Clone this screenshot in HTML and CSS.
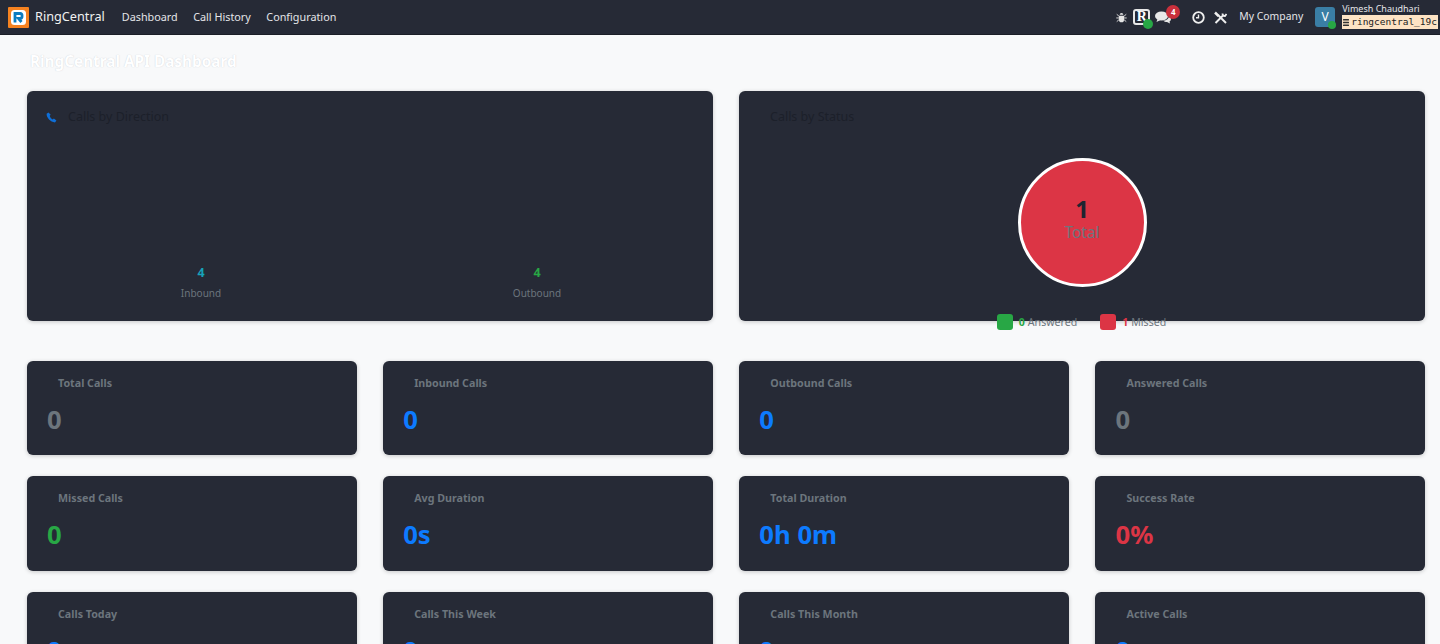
FILE: index.html
```html
<!DOCTYPE html>
<html lang="en">
<head>
<meta charset="UTF-8" />
<meta name="viewport" content="width=device-width, initial-scale=1" />
<title>RingCentral API Dashboard</title>
<link rel="stylesheet" href="styles.css">
</head>
<body>

<nav class="navbar">
  <svg class="brand-logo" width="21" height="21" viewBox="0 0 21 21">
    <rect width="21" height="21" rx="1" fill="#f58220"/>
    <rect x="3" y="3" width="15" height="15" rx="3.500" fill="#fff"/>
    <path d="M7 15.500V6.500h5.500a1.500 1.500 0 0 1 1.500 1.500v2a1.500 1.500 0 0 1-1.500 1.500H10.500l3 3.500" fill="none" stroke="#0a7cc1" stroke-width="2.800"/>
  </svg>
  <span class="brand-name">RingCentral</span>
  <div class="nav-menu">
    <a>Dashboard</a>
    <a>Call History</a>
    <a>Configuration</a>
  </div>

  <div class="nav-right">
    <svg class="icon-bug" width="11" height="11" viewBox="0 0 12 12" fill="#e4e4e4">
      <path d="M4 3a2 2 0 0 1 4 0z"/>
      <path d="M3.200 4h5.600v4.500a2.800 2.800 0 0 1-5.600 0z"/>
      <path d="M.8 2.500l2.400 2M11.200 2.500l-2.400 2M.3 6.500h3M8.700 6.500h3M.8 10.500l2.400-2M11.200 10.500l-2.400-2" stroke="#e4e4e4" stroke-width="1"/>
    </svg>
    <div class="icon-rbox">
      <span>R</span>
      <i class="dot"></i>
    </div>
    <div class="icon-chat">
      <svg width="16" height="13" viewBox="0 0 16 13" fill="#e8e8e8">
        <ellipse cx="6.500" cy="5" rx="6.500" ry="4.500"/>
        <path d="M2.500 8L1.500 11l4-2z"/>
        <path d="M14 5c1.500 1 2 2 2 3 0 1-.6 2-1.500 2.500l.5 2-3-1.500c-1.500 0-3-.5-3.500-1.500 3 0 5.500-2 5.500-4.500z"/>
      </svg>
      <span class="badge">4</span>
    </div>
    <svg class="icon-clock" width="13" height="13" viewBox="0 0 13 13" fill="none" stroke="#eee" stroke-width="1.800">
      <circle cx="6.500" cy="6.500" r="5.300"/>
      <path d="M6.500 3.500v3.200H4" stroke-width="1.400"/>
    </svg>
    <svg class="icon-tools" width="13" height="13" viewBox="0 0 13 13" fill="none" stroke="#eee">
      <path d="M1.500 12L9 4.500" stroke-width="2"/>
      <path d="M12 12L4 4" stroke-width="2"/>
      <path d="M1 1.500L4.500 5" stroke-width="2.500"/>
      <path d="M8.500 2.500a2.500 2.500 0 0 0 2.500 2.500L12.500 3" stroke-width="1.800"/>
    </svg>
    <span class="company">My Company</span>
    <div class="avatar">V<i class="dot"></i></div>
    <div class="user">
      <div class="user-name">Vimesh Chaudhari</div>
      <div class="db-tag">
        <svg width="6" height="7" viewBox="0 0 6 7" fill="#333"><rect width="6" height="1.500" rx=".5"/><rect y="2.700" width="6" height="1.500" rx=".5"/><rect y="5.400" width="6" height="1.500" rx=".5"/></svg>
        <code>ringcentral_19c</code>
      </div>
    </div>
  </div>
</nav>

<main class="content">
  <h1 class="page-title">RingCentral API Dashboard</h1>

  <div class="chart-row">
    <section class="panel">
      <h2 class="panel-title">
        <svg width="11" height="11" viewBox="0 0 11 11"><path d="M2.500.5L.6 1.800C.4 5.500 4.500 10.300 9 10.400l1.400-2L7.900 6.600 6.700 7.500C5.200 6.800 4 5.300 3.700 3.800l1-1z" fill="#0f6fd8"/></svg>
        Calls by Direction
      </h2>
      <div class="direction">
        <div class="direction-col">
          <div class="direction-value inbound">4</div>
          <div class="direction-label">Inbound</div>
        </div>
        <div class="direction-col">
          <div class="direction-value outbound">4</div>
          <div class="direction-label">Outbound</div>
        </div>
      </div>
    </section>

    <section class="panel">
      <h2 class="panel-title status-title">Calls by Status</h2>
      <div class="pie">
        <div class="pie-value">1</div>
        <div class="pie-label">Total</div>
      </div>
      <div class="legend">
        <div class="legend-item"><i class="swatch answered"></i><b class="answered-text">0</b> Answered</div>
        <div class="legend-item"><i class="swatch missed"></i><b class="missed-text">1</b> Missed</div>
      </div>
    </section>
  </div>

  <div class="stats">
    <div class="stat"><div class="stat-label">Total Calls</div><div class="stat-value grey">0</div></div>
    <div class="stat"><div class="stat-label">Inbound Calls</div><div class="stat-value blue">0</div></div>
    <div class="stat"><div class="stat-label">Outbound Calls</div><div class="stat-value blue">0</div></div>
    <div class="stat"><div class="stat-label">Answered Calls</div><div class="stat-value grey">0</div></div>
    <div class="stat"><div class="stat-label">Missed Calls</div><div class="stat-value green">0</div></div>
    <div class="stat"><div class="stat-label">Avg Duration</div><div class="stat-value blue">0s</div></div>
    <div class="stat"><div class="stat-label">Total Duration</div><div class="stat-value blue">0h 0m</div></div>
    <div class="stat"><div class="stat-label">Success Rate</div><div class="stat-value red">0%</div></div>
    <div class="stat"><div class="stat-label">Calls Today</div><div class="stat-value blue">0</div></div>
    <div class="stat"><div class="stat-label">Calls This Week</div><div class="stat-value blue">0</div></div>
    <div class="stat"><div class="stat-label">Calls This Month</div><div class="stat-value blue">0</div></div>
    <div class="stat"><div class="stat-label">Active Calls</div><div class="stat-value blue">0</div></div>
  </div>
</main>

</body>
</html>
```

FILE: styles.css
```css
* {
  box-sizing: border-box;
}
html, body {
  height: 100%;
}
body {
  margin: 0;
  overflow: hidden;
  background: #f8f9fa;
  color: #212529;
  font-family: "Noto Sans", "Open Sans", sans-serif;
}

/* Navbar */
.navbar {
  display: flex;
  align-items: center;
  height: 35px;
  padding: 0 2px 0 8px;
  background: #262a36;
  color: #e4e5e8;
  font-size: 10.800px;
  border-bottom: 1px solid #1b1e27;
}
.brand-logo {
  flex: none;
}
.brand-name {
  margin: 0 0 2px 6px;
  font-size: 12.700px;
  color: #f0f0f0;
}
.nav-menu {
  display: flex;
  gap: 15.500px;
  margin: 0 0 2px 17px;
}
.nav-right {
  display: flex;
  align-items: center;
  margin-left: auto;
}
.icon-rbox {
  position: relative;
  width: 17px;
  height: 16px;
  margin-left: 6px;
  border: 2px solid #e8e8e8;
  border-radius: 3px;
  color: #fff;
  font-family: "Liberation Serif", serif;
  font-weight: 700;
  font-size: 14px;
  line-height: 12px;
  text-align: center;
}
.dot {
  position: absolute;
  right: -5px;
  bottom: -6px;
  width: 10px;
  height: 10px;
  border-radius: 50%;
  background: #28a745;
}
.icon-chat {
  position: relative;
  display: flex;
  margin-left: 5px;
  width: 16px;
}
.badge {
  position: absolute;
  top: -6px;
  left: 11px;
  width: 14px;
  height: 14px;
  border-radius: 7px;
  background: #c9303c;
  color: #fff;
  font-size: 8px;
  font-weight: 700;
  line-height: 14px;
  text-align: center;
}
.icon-clock {
  margin-left: 21px;
}
.icon-tools {
  margin-left: 9px;
}
.company {
  margin: 0 0 2px 12px;
  font-size: 10.400px;
}
.avatar {
  position: relative;
  width: 20px;
  height: 20px;
  margin-left: 12px;
  border-radius: 3px;
  background: #3a7ea5;
  color: #fff;
  font-size: 12px;
  line-height: 20px;
  text-align: center;
}
.avatar .dot {
  right: -1px;
  bottom: -2px;
  width: 8px;
  height: 8px;
}
.user {
  margin-left: 7px;
}
.user-name {
  font-size: 9px;
  line-height: 12px;
  margin-top: -2px;
}
.db-tag {
  display: flex;
  align-items: center;
  gap: 2px;
  height: 14px;
  padding: 0 1px;
  background: #fde3c4;
  color: #222;
}
.db-tag code {
  font-family: "DejaVu Sans Mono", "Liberation Mono", monospace;
  font-size: 9.500px;
  line-height: 14px;
}

/* Page */
.content {
  padding: 0 15px 0 27px;
}
.page-title {
  margin: 0;
  padding: 16px 0 0 3px;
  height: 56px;
  color: #fff;
  font-size: 15.300px;
  font-weight: 700;
  line-height: 20px;
  text-shadow: 0 0 1px rgba(120, 130, 150, .4);
}
.chart-row {
  display: grid;
  grid-template-columns: 1fr 1fr;
  gap: 26px;
}
.panel {
  height: 230px;
  background: #262a36;
  border-radius: 6px;
  box-shadow: 0 1px 4px rgba(0, 0, 0, .2);
}
.panel-title {
  display: flex;
  align-items: center;
  gap: 11px;
  margin: 0;
  padding: 13px 0 0 19px;
  height: 39px;
  color: #1c202a;
  font-size: 12.500px;
  font-weight: 400;
  line-height: 18px;
}
.status-title {
  padding-left: 31px;
}
.direction {
  display: grid;
  grid-template-columns: 336px 336px;
  padding: 134px 0 0 6px;
}
.direction-col {
  text-align: center;
}
.direction-value {
  font-size: 12.500px;
  font-weight: 700;
  line-height: 18px;
}
.direction-label {
  margin-top: 4px;
  color: #6c757d;
  font-size: 10px;
  line-height: 14px;
}
.inbound {
  color: #17a2b8;
}
.outbound {
  color: #28a745;
}
.pie {
  width: 129px;
  height: 129px;
  margin: 28px auto 0;
  padding-top: 34px;
  border: 3px solid #fff;
  border-radius: 50%;
  background: #dc3545;
  text-align: center;
}
.pie-value {
  color: #1f2430;
  font-size: 24px;
  font-weight: 700;
  line-height: 28px;
}
.pie-label {
  color: #6c757d;
  font-size: 15.500px;
  line-height: 18px;
}
.legend {
  display: flex;
  justify-content: center;
  gap: 23px;
  margin-top: 27px;
  padding-right: 1px;
  color: #6c757d;
  font-size: 10.600px;
}
.legend-item {
  display: flex;
  align-items: center;
  gap: 3px;
  height: 16px;
}
.legend-item b {
  margin-left: 3px;
  font-weight: 700;
}
.swatch {
  width: 16px;
  height: 16px;
  border-radius: 3px;
}
.answered {
  background: #28a745;
}
.missed {
  background: #dc3545;
}
.answered-text {
  color: #28a745;
}
.missed-text {
  color: #dc3545;
}

/* Stat cards */
.stats {
  display: grid;
  grid-template-columns: repeat(4, 1fr);
  column-gap: 26.670px;
  row-gap: 21px;
  margin-top: 39.800px;
}
.stat {
  height: 94.500px;
  padding: 14px 20px;
  background: #262a36;
  border-radius: 6px;
  box-shadow: 0 1px 4px rgba(0, 0, 0, .2);
}
.stat-label {
  padding-left: 11px;
  color: #6c757d;
  font-size: 10.700px;
  font-weight: 700;
  line-height: 16px;
}
.stat-value {
  margin-top: 11px;
  font-size: 25.700px;
  font-weight: 700;
  line-height: 36px;
}
.grey {
  color: #6c757d;
}
.blue {
  color: #0d7bff;
}
.green {
  color: #28a745;
}
.red {
  color: #dc3545;
}
```
